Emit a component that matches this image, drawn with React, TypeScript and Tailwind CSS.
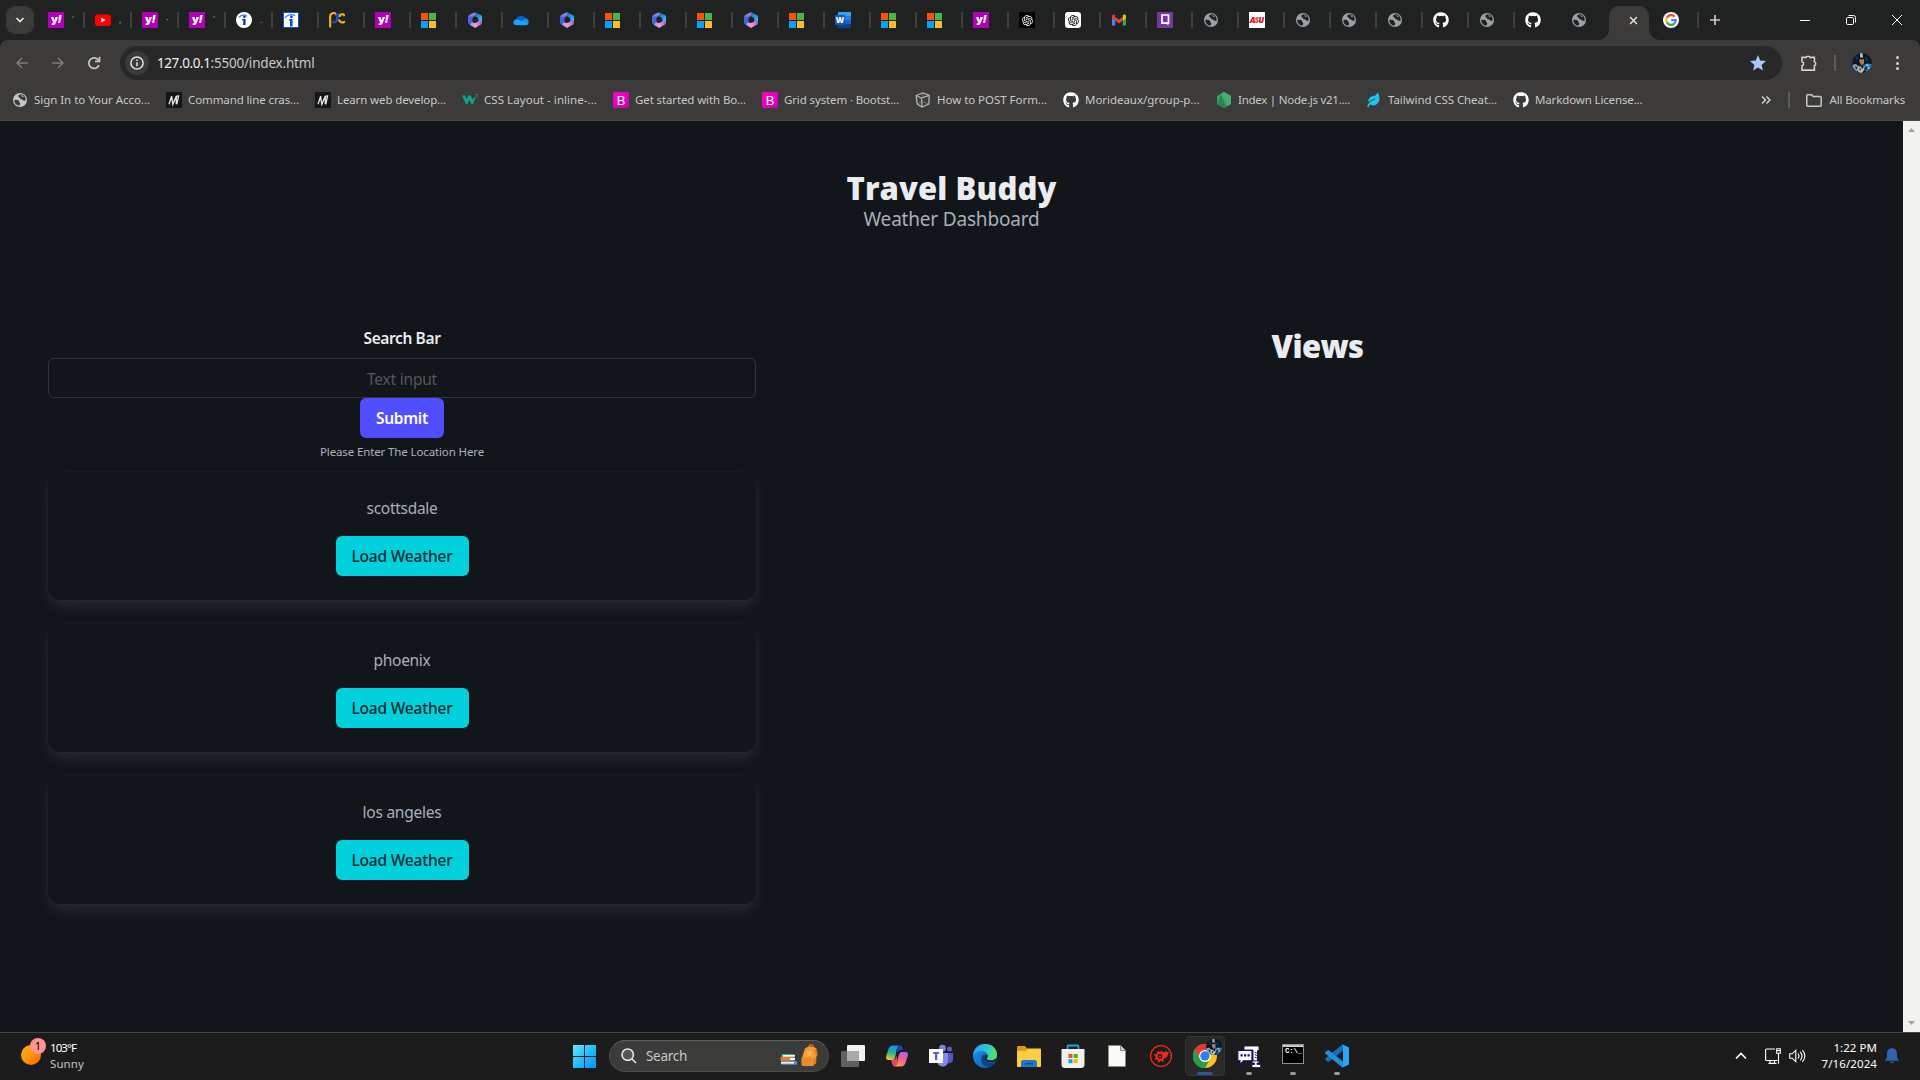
import { useLayoutEffect, useRef, useState, type ReactNode } from "react";
import { FaGithub, FaLeaf } from "react-icons/fa";
import { RiOpenaiFill } from "react-icons/ri";

/* Text whose letter spacing is adjusted so that it fills the given width. */
function Fit({ w, className = "", children }: { w: number; className?: string; children: string }) {
  const ref = useRef<HTMLSpanElement>(null);
  const [spacing, setSpacing] = useState(0);
  useLayoutEffect(() => {
    if (ref.current) {
      const natural = ref.current.getBoundingClientRect().width;
      setSpacing((w - natural) / children.length);
    }
  }, [w, children]);
  return (
    <span ref={ref} className={`inline-block whitespace-nowrap ${className}`} style={{ letterSpacing: `${spacing}px` }}>
      {children}
    </span>
  );
}

function Yahoo() {
  return (
    <span className="flex h-4 w-4 items-center justify-center bg-[#b100b8] pb-[2px] font-['Inter'] text-[11px] leading-none font-black tracking-[-0.6px] text-white">
      y<i>!</i>
    </span>
  );
}

function Youtube() {
  return (
    <svg viewBox="0 0 16 16" className="h-4 w-4">
      <rect x="0" y="2.5" width="16" height="11.5" rx="3" fill="#f00" />
      <path d="M6.4 5.8v4.6l4-2.3z" fill="#fff" />
    </svg>
  );
}

function InfoRound() {
  return (
    <svg viewBox="0 0 16 16" className="h-4 w-4">
      <circle cx="8" cy="8" r="8" fill="#fff" />
      <path d="M3 5.4C5 2.6 9 2.4 11 4.4" stroke="#3a6fc0" strokeWidth="1.1" fill="none" />
      <circle cx="8.4" cy="4.9" r="1.3" fill="#123d8f" />
      <path d="M6 7h3.600v6H7.200V8.200H6z" fill="#123d8f" />
    </svg>
  );
}

function InfoSquare() {
  return (
    <svg viewBox="0 0 16 16" className="h-4 w-4">
      <rect x=".5" y=".5" width="15" height="15" fill="#fff" stroke="#0a50d8" />
      <path d="M2 6C4 2.4 9 1.8 12 3.8" stroke="#3a7fe0" strokeWidth="1.2" fill="none" />
      <circle cx="8.4" cy="4.8" r="1.4" fill="#0a50d8" />
      <path d="M6 7h3.6v7.5H7V8.4H6z" fill="#0a50d8" />
    </svg>
  );
}

function PcLogo() {
  return (
    <svg viewBox="0 0 16 16" className="h-4 w-4" fill="none" strokeWidth="2.100">
      <path d="M1.200 15.500V4.500A3.300 3.300 0 0 1 7.500 3" stroke="#f9b21d" />
      <path d="M3.200 9.800c3 1.400 5.200-.3 4.900-3.600C8 3.400 9 1.900 11.300 1.800" stroke="#1b52c4" />
      <path d="M7 2c2 1.200 2 5 .3 6.500" stroke="#1b52c4" />
      <path d="M15.700 4C14 .9 10.800 2.200 10.600 5" stroke="#f9b21d" />
      <path d="M9.900 7.400c.4 3.200 3.600 4 6 2" stroke="#f9b21d" />
    </svg>
  );
}

function Microsoft() {
  return (
    <span className="grid h-[15px] w-[15px] grid-cols-2 gap-px">
      <span className="bg-[#ff5008]" />
      <span className="bg-[#46b83c]" />
      <span className="bg-[#00a3ff]" />
      <span className="bg-[#ffbb28]" />
    </span>
  );
}

function Office() {
  return (
    <svg viewBox="0 0 16 16" className="h-4 w-4">
      <defs>
        <linearGradient id="ofA" x1="0" y1="0" x2="0" y2="1">
          <stop offset="0" stopColor="#b79be8" />
          <stop offset=".4" stopColor="#5a5fd8" />
          <stop offset="1" stopColor="#1b6fd8" />
        </linearGradient>
        <linearGradient id="ofB" x1="0" y1="0" x2="1" y2="1">
          <stop offset="0" stopColor="#1f5fc8" />
          <stop offset="1" stopColor="#2fd0ff" />
        </linearGradient>
        <linearGradient id="ofC" x1="0" y1="0" x2="1" y2="0">
          <stop offset="0" stopColor="#b98cf0" />
          <stop offset=".5" stopColor="#f09ae0" />
          <stop offset="1" stopColor="#a05ab0" />
        </linearGradient>
      </defs>
      <path d="M8.500.3C5 1.500 1.200 3 1 5v6.500l3.500 2 1.300-3.400-.5-2.400.6-2.500L9 3.600z" fill="url(#ofA)" />
      <path d="M8 .3 13.500 3C14.700 3.700 15 4.200 15 5.500v4.300l-3.800-1.300V6L8 4.300z" fill="url(#ofB)" />
      <path d="M2.800 12.800 8 15.900l6.500-3.700c.5-.6.6-2.600.5-3.800l-3.700.6C10.500 10.200 9.500 11 7.500 11L5 10.300z" fill="url(#ofC)" />
    </svg>
  );
}

function OneDrive() {
  return (
    <svg viewBox="0 0 16 16" className="h-4 w-4">
      <path d="M3.200 7.500A5 5 0 0 1 12.500 6.400L9 12H3.500A3 3 0 0 1 3.200 7.500" fill="#0a5fc0" />
      <path d="M12.200 6.200a3.600 3.600 0 0 1 1 7h-9z" fill="#1490df" />
      <path d="M.4 11c-.6-3 3-5 5.600-3l9.400 3.600c-.4 1-1.400 1.500-2.400 1.500H3.200C1.800 13.100.6 12.300.4 11" fill="#1aa5ff" />
    </svg>
  );
}

function Word() {
  return (
    <span className="relative block h-4 w-4">
      <span className="absolute top-0 left-[3px] grid h-4 w-[13px] grid-rows-4 overflow-hidden rounded-[1px]">
        <span className="bg-[#2fa5f5]" />
        <span className="bg-[#1b86dd]" />
        <span className="bg-[#1565c8]" />
        <span className="bg-[#0f3f92]" />
      </span>
      <span className="absolute top-[3px] left-0 flex h-[10px] w-[10px] items-center justify-center rounded-[1px] bg-[#1657c0] font-['Open_Sans'] text-[8px] font-extrabold text-white">
        W
      </span>
    </span>
  );
}

function Globe({ color = "#9aa0a6", bg = "#202221" }: { color?: string; bg?: string }) {
  return (
    <svg viewBox="0 0 16 16" className="h-4 w-4">
      <circle cx="8" cy="8" r="7" fill={color} />
      <path d="M9.300 2.300c-2 .2-3.300.8-3 2.200.2 1.200 1.700.8 1.900 2 .2 1.400 1.900.5 2.500 1.600.4.900 1.700.6 2.900.4.3-2.800-1-5.500-4.300-6.200" fill={bg} />
      <path d="M2.400 7.900c1.700-.3 3.500-.3 4.300.6.900 1-.1 1.500 1 2 .9.500.4 1.900-.3 3C4.300 13.300 2.200 11 2.400 7.900" fill={bg} />
      <path d="M9 3.300c1 0 2.600.6 2.900 1.600-.9.500-2.400-.3-2.900-1.600" fill={color} />
    </svg>
  );
}

function Gmail() {
  return (
    <svg viewBox="0 0 16 16" className="h-4 w-4">
      <path d="M1 4v9.500h3.200V6.500z" fill="#4285f4" />
      <path d="M11.800 6.500v7H15V4z" fill="#34a853" />
      <path d="M4.200 4.800 8 7.700l3.800-2.900v3.800L8 11.400 4.200 8.600z" fill="#ea4335" />
      <path d="M1 4.200C1 2.400 2.800 2 4.200 3.300v5.300L1 6.200z" fill="#e33a2a" />
      <path d="M15 4.200c0-1.800-1.800-2.200-3.200-.9v5.300L15 6.200z" fill="#fbbc04" />
    </svg>
  );
}

function PurpleBook() {
  return (
    <svg viewBox="0 0 16 16" className="h-4 w-4">
      <rect width="16" height="16" fill="#7237a0" />
      <path d="M5 3h6.500v8.200H5z" fill="none" stroke="#fff" strokeWidth="1.700" />
      <path d="M8.300 10.500h3v3z" fill="#fff" />
    </svg>
  );
}

function Asu() {
  return (
    <span className="flex h-4 w-4 items-center justify-center overflow-hidden bg-white pr-px font-['Open_Sans'] text-[8.5px] leading-none font-extrabold tracking-[-1px] text-[#d3122e] italic">
      A<span className="text-[#dc5a1c]">S</span>U
    </span>
  );
}

function Google() {
  return (
    <svg viewBox="0 0 16 16" className="h-4 w-4" fill="none" strokeWidth="2.200">
      <circle cx="8" cy="8" r="8" fill="#fff" />
      <path d="M11.600 4.700A4.800 4.800 0 0 0 3.900 5.600" stroke="#ea4335" />
      <path d="M3.900 5.600a4.800 4.800 0 0 0 0 4.800" stroke="#fbbc05" />
      <path d="M3.900 10.400a4.800 4.800 0 0 0 7.400 1.200" stroke="#34a853" />
      <path d="M11.300 11.600A4.800 4.800 0 0 0 12.800 8.100H8.200" stroke="#4285f4" />
    </svg>
  );
}

function Avatar({ className }: { className: string }) {
  return (
    <svg viewBox="0 0 20 20" className={className}>
      <clipPath id="avatarClip">
        <circle cx="10" cy="10" r="10" />
      </clipPath>
      <g clipPath="url(#avatarClip)">
        <rect width="20" height="20" fill="#0c1826" />
        <path d="M8 0h2.500l.5 5H8z" fill="#a8c0c8" />
        <path d="M3 3l3 1-1 4zM13 3l3 3-2 3z" fill="#1d3a55" />
        <path d="M7.500 6h4.500v4.500L9.500 12.500 7.500 9z" fill="#a97c60" />
        <path d="M7.500 5c1-1.500 3.500-1 4 1.500l-4-.2z" fill="#1a1512" />
        <path d="M0 12l4-1 2 2-2 2 2 3-3 1z" fill="#8fa9c0" />
        <path d="M11 12l4-1.500 5 .5v4l-5 4-3-2z" fill="#2f78b4" />
        <path d="M6 12.500l2 1.500 1-1 1 3 3-3-1 4-2 3H7l-2-4z" fill="#aebdc8" />
        <path d="M3 13l2 1-1 3zM12 15l3-1-1 4zM7 15l2 1-1 2z" fill="#101c28" />
        <path d="M14 11l3 1-2 1.500zM16 14l2 .5-2 2z" fill="#b6d6ea" />
      </g>
    </svg>
  );
}

function Gpt({ dark }: { dark?: boolean }) {
  return dark ? (
    <span className="flex h-4 w-4 items-center justify-center bg-black text-white">
      <RiOpenaiFill size={13} />
    </span>
  ) : (
    <span className="flex h-4 w-4 items-center justify-center rounded-[3px] bg-white text-black">
      <RiOpenaiFill size={13} />
    </span>
  );
}

type Tab = { icon: ReactNode; wide?: boolean; hint?: string; noSep?: boolean };

const tabs: Tab[] = [
  { icon: <Yahoo />, wide: true, hint: "'" },
  { icon: <Youtube />, wide: true, hint: "," },
  { icon: <Yahoo />, wide: true, hint: "·" },
  { icon: <Yahoo />, wide: true, hint: "'" },
  { icon: <InfoRound />, wide: true, hint: "." },
  { icon: <InfoSquare /> },
  { icon: <PcLogo /> },
  { icon: <Yahoo /> },
  { icon: <Microsoft /> },
  { icon: <Office /> },
  { icon: <OneDrive /> },
  { icon: <Office /> },
  { icon: <Microsoft /> },
  { icon: <Office /> },
  { icon: <Microsoft /> },
  { icon: <Office /> },
  { icon: <Microsoft /> },
  { icon: <Word /> },
  { icon: <Microsoft /> },
  { icon: <Microsoft /> },
  { icon: <Yahoo /> },
  { icon: <Gpt dark /> },
  { icon: <Gpt /> },
  { icon: <Gmail /> },
  { icon: <PurpleBook /> },
  { icon: <Globe /> },
  { icon: <Asu /> },
  { icon: <Globe /> },
  { icon: <Globe /> },
  { icon: <Globe /> },
  { icon: <FaGithub size={16} color="#fff" /> },
  { icon: <Globe /> },
  { icon: <FaGithub size={16} color="#fff" />, noSep: true },
];

function TabCell({ tab }: { tab: Tab }) {
  return (
    <div className={`flex h-4 shrink-0 items-center pr-[10px] ${tab.wide ? "w-[47px]" : "w-[46px]"}`}>
      <span className="flex h-4 w-4 items-center">{tab.icon}</span>
      <span className="flex-1 pl-2 text-[9px] leading-4 text-[#9a9a98]">{tab.hint}</span>
      {!tab.noSep && <span className="h-4 w-[2px] bg-[#3f403e]" />}
    </div>
  );
}

function TabStrip() {
  return (
    <div className="flex h-10 items-start bg-[#202221] pt-[6px] pl-[6px]">
      <div className="mr-[14px] flex h-7 w-7 items-center justify-center rounded-[9px] bg-[#3c3b39]">
        <svg viewBox="0 0 10 10" className="h-[10px] w-[10px]" fill="none" stroke="#e6e6e4" strokeWidth="1.700">
          <path d="M1.500 3 5 6.500 8.500 3" />
        </svg>
      </div>
      <div className="flex pt-[6px]">
        {tabs.map((tab, i) => (
          <TabCell key={i} tab={tab} />
        ))}
        <span className="w-[38px]">
          <Globe />
        </span>
      </div>
      <div className="relative flex h-[34px] w-10 items-center justify-center rounded-t-[10px] bg-[#3c3b39] pb-[6px] pl-2">
        <span className="absolute bottom-0 -left-[10px] h-[10px] w-[10px] bg-[radial-gradient(circle_at_0_0,#202221_9.500px,#3c3b39_10px)]" />
        <span className="absolute -right-[10px] bottom-0 h-[10px] w-[10px] bg-[radial-gradient(circle_at_100%_0,#202221_9.500px,#3c3b39_10px)]" />
        <svg viewBox="0 0 10 10" className="h-[9px] w-[9px]" stroke="#e0e0de" strokeWidth="1.700">
          <path d="M1.200 1.200 8.800 8.800M8.800 1.200 1.200 8.800" />
        </svg>
      </div>
      <div className="ml-[14px] flex pt-[6px]">
        <TabCell tab={{ icon: <Google /> }} />
        <svg viewBox="0 0 12 12" className="mt-[2px] h-3 w-3" stroke="#c7c7c5" strokeWidth="1.700">
          <path d="M6 1v10M1 6h10" />
        </svg>
      </div>
      <div className="ml-auto flex h-7 items-center text-white">
        <span className="flex w-[46px] justify-center">
          <span className="h-px w-[10px] bg-white" />
        </span>
        <span className="flex w-[46px] justify-center">
          <svg viewBox="0 0 10 10" className="h-[10px] w-[10px]" fill="none" stroke="#fff">
            <rect x=".5" y="2.500" width="7" height="7" rx="1.200" />
            <path d="M2.500.5H7.500A2 2 0 0 1 9.500 2.500V7.500" />
          </svg>
        </span>
        <span className="flex w-[46px] justify-center">
          <svg viewBox="0 0 10 10" className="h-[10px] w-[10px]" stroke="#fff">
            <path d="M0 0 10 10M10 0 0 10" />
          </svg>
        </span>
      </div>
    </div>
  );
}

function AddressBar() {
  return (
    <div className="flex h-[46px] items-center pl-4">
      <svg viewBox="0 0 12 12" className="h-3 w-3" fill="none" stroke="#7d7d7b" strokeWidth="1.500">
        <path d="M12 6H1M6 1 1 6l5 5" />
      </svg>
      <svg viewBox="0 0 12 12" className="ml-6 h-3 w-3" fill="none" stroke="#7d7d7b" strokeWidth="1.500">
        <path d="M0 6h11M6 1l5 5-5 5" />
      </svg>
      <svg viewBox="0 0 14 14" className="ml-[23px] h-[14px] w-[14px]" fill="none" stroke="#c7c7c5" strokeWidth="1.700">
        <path d="M12 9.200A5.300 5.300 0 1 1 11.600 4.300" />
        <path d="M12.500.8v4.600H8" />
      </svg>
      <div className="ml-[19px] flex h-[34px] w-[1662px] items-center rounded-full bg-[#282828] pr-4 pl-[5px]">
        <span className="flex h-6 w-6 items-center justify-center rounded-full bg-[#3c3b39]">
          <svg viewBox="0 0 14 14" className="h-[14px] w-[14px]" fill="none" stroke="#e3e3e1" strokeWidth="1.500">
            <circle cx="7" cy="7" r="6.100" />
            <path d="M7 6.300v4M7 3.600v1.500" />
          </svg>
        </span>
        <span className="ml-2 flex text-[13.5px] text-[#c9c9c7]">
          <Fit w={53.500} className="text-[#f0f0ee]">127.0.0.1</Fit>
          <Fit w={104}>:5500/index.html</Fit>
        </span>
        <svg viewBox="0 0 16 16" className="ml-auto h-4 w-4" fill="#a8c7fa">
          <path d="M8 0 10.200 5.600 16 6.100 11.600 9.900 13 15.600 8 12.500 3 15.600 4.400 9.900 0 6.100 5.800 5.600z" />
        </svg>
      </div>
      <svg viewBox="0 0 18 18" className="ml-[18px] h-[18px] w-[18px]" fill="none" stroke="#d0d0ce" strokeWidth="1.600">
        <path d="M2 3.400h4.200a2 1.700 0 0 1 3.800 0h4.400v4.400a1.700 1.900 0 0 1 0 3.700v4.600H2v-4.300a2.100 2.100 0 0 0 0-4.100z" />
      </svg>
      <span className="ml-[16px] h-4 w-[2px] bg-[#5c5c5a]" />
      <Avatar className="ml-4 h-5 w-5" />
      <span className="ml-6 flex flex-col gap-[2.500px]">
        <i className="h-[3px] w-[3px] rounded-full bg-[#d0d0ce]" />
        <i className="h-[3px] w-[3px] rounded-full bg-[#d0d0ce]" />
        <i className="h-[3px] w-[3px] rounded-full bg-[#d0d0ce]" />
      </span>
    </div>
  );
}

function Mdn() {
  return (
    <svg viewBox="0 0 16 16" className="h-4 w-4" fill="none" stroke="#e8e8e8">
      <rect width="16" height="16" fill="#15141a" stroke="none" />
      <path d="M3 12.300 5.600 4.200 6.800 12.300 10.300 4.200v8.100M10.300 4.200l2.300-.2-1.800 8.300" strokeWidth="1.300" />
    </svg>
  );
}

function W3() {
  return (
    <svg viewBox="0 0 17 16" className="h-4 w-[17px]" fill="#12a08a" stroke="none">
      <path d="M0 3.600h3.200l1.500 3.900 1.500-3.900h2.600l1.800 4 1-2h2.200L11 12.300H9.500L7.400 7.800l-2 4.500H4z" />
      <path d="M13.600 2.400h2l-1 1.300c1.600.2 1 2-.9 1.500" fill="none" stroke="#12a08a" strokeWidth=".9" />
    </svg>
  );
}

function Bootstrap() {
  return (
    <span className="flex h-4 w-4 items-center justify-center rounded-[2px] bg-linear-to-br from-[#ff00c8] to-[#c800b4] font-['Liberation_Sans'] text-[13px] leading-none text-white">
      B
    </span>
  );
}

function Cube() {
  return (
    <svg viewBox="0 0 16 16" className="h-4 w-4" fill="none" stroke="#b4b4b0" strokeWidth="1.300">
      <path d="M1.200 3.500 8 1l6.300 2.400-.5 8.600L7 15 2.200 12z" />
      <path d="M1.200 3.500 6.500 6l7.800-2.600M6.500 6 7 15" />
      <path d="M2.200 12l4.600-2.500 7 2.500M8 1v4" strokeWidth=".8" stroke="#8a8a87" />
    </svg>
  );
}

function NodeHex() {
  return (
    <svg viewBox="0 0 16 16" className="h-4 w-4">
      <path d="M8 0l7 4v8l-7 4-7-4V4z" fill="#3c9f62" />
      <path d="M8 0l7 4v8l-3 1.700L5 1.700z" fill="#4aae6e" />
      <path d="M1 12l4-9 5 11.800L8 16z" fill="#2c8550" />
    </svg>
  );
}

const bookmarks: { icon: ReactNode; text: string; cell: string; w: number }[] = [
  { icon: <Globe color="#c4c7c5" bg="#3c3b39" />, text: "Sign In to Your Acco...", cell: "w-[154px]", w: 116 },
  { icon: <Mdn />, text: "Command line cras...", cell: "w-[149px]", w: 111 },
  { icon: <Mdn />, text: "Learn web develop...", cell: "w-[147px]", w: 109 },
  { icon: <W3 />, text: "CSS Layout - inline-...", cell: "w-[151px]", w: 113 },
  { icon: <Bootstrap />, text: "Get started with Bo...", cell: "w-[149px]", w: 111 },
  { icon: <Bootstrap />, text: "Grid system · Bootst...", cell: "w-[153px]", w: 115 },
  { icon: <Cube />, text: "How to POST Form...", cell: "w-[148px]", w: 110 },
  { icon: <FaGithub size={16} color="#fff" />, text: "Morideaux/group-p...", cell: "w-[153px]", w: 114.5 },
  { icon: <NodeHex />, text: "Index | Node.js v21....", cell: "w-[150px]", w: 112 },
  { icon: <FaLeaf size={14} color="#16c8f0" className="-rotate-12" />, text: "Tailwind CSS Cheat...", cell: "w-[147px]", w: 109 },
  { icon: <FaGithub size={16} color="#fff" />, text: "Markdown License...", cell: "w-[150px]", w: 107.5 },
];

function BookmarkBar() {
  return (
    <div className="flex h-[35px] items-center border-b border-[#4b4b49] pb-[6px] pl-3 text-[11.5px] text-[#c9c9c7]">
      {bookmarks.map((b) => (
        <div key={b.text} className={`flex shrink-0 items-center ${b.cell}`}>
          <span className="flex h-4 w-[22px] shrink-0 items-center">{b.icon}</span>
          <Fit w={b.w}>{b.text}</Fit>
        </div>
      ))}
      <div className="ml-auto flex items-center pr-[15px]">
        <svg viewBox="0 0 10 8" className="h-2 w-[10px]" fill="none" stroke="#d0d0ce" strokeWidth="1.500">
          <path d="M1 .5 4.500 4 1 7.500M5.500.5 9 4 5.500 7.500" />
        </svg>
        <span className="ml-[17px] h-4 w-[2px] bg-[#5c5c5a]" />
        <svg viewBox="0 0 16 13" className="mr-2 ml-4 h-[13px] w-4" fill="none" stroke="#c9c9c7" strokeWidth="1.500">
          <path d="M.8 1.700a.9.900 0 0 1 .9-.9h4l1.600 1.700h7a.9.900 0 0 1 .9.900v7.900a.9.900 0 0 1-.9.900H1.700a.9.900 0 0 1-.9-.9z" />
        </svg>
        <Fit w={75.500}>All Bookmarks</Fit>
      </div>
    </div>
  );
}

const cities: { name: string; w: number }[] = [
  { name: "scottsdale", w: 71 },
  { name: "phoenix", w: 57 },
  { name: "los angeles", w: 79 },
];

function Page() {
  return (
    <div className="flex h-[911px]">
      <main className="flex-1 bg-[#12161a] text-center text-[#a9afbb]">
        <header className="flex h-[183px] flex-col items-center pt-[49px]">
          <h1 className="h-9 font-['Open_Sans'] text-[31px] leading-9 font-extrabold text-[#ebecf0]">
            <Fit w={210}>Travel Buddy</Fit>
          </h1>
          <p className="pt-px text-[19px] leading-6">
            <Fit w={176}>Weather Dashboard</Fit>
          </p>
        </header>
        <div className="flex">
          <section className="ml-12 w-[708px]">
            <div className="h-[54px] pt-[22px] text-[15.5px] leading-6 font-semibold text-[#ebecf0]">
              <Fit w={77}>Search Bar</Fit>
            </div>
            <div className="flex h-10 items-center justify-center rounded-md border border-[#2f3440] pt-[3px] text-[15.5px] text-[#53565c]">
              <Fit w={70}>Text input</Fit>
            </div>
            <button className="mx-auto flex h-10 w-[84px] items-center justify-center rounded-md bg-[#504eff] pt-[2px] text-[15.5px] font-semibold text-white">
              <Fit w={52}>Submit</Fit>
            </button>
            <p className="h-[34px] pt-[5px] text-[11.5px] leading-[18px] text-[#abb1bf]">
              <Fit w={164}>Please Enter The Location Here</Fit>
            </p>
            <div className="flex flex-col gap-6">
              {cities.map((c) => (
                <article
                  key={c.name}
                  className="flex h-32 flex-col items-center rounded-xl bg-[#12161a] pt-6 shadow-[0_8px_16px_-2px_rgba(235,236,240,0.1),0_0_0_1px_rgba(235,236,240,0.02)]"
                >
                  <span className="text-[15.5px] leading-6">
                    <Fit w={c.w}>{c.name}</Fit>
                  </span>
                  <button className="mt-4 flex h-10 w-[133px] items-center justify-center rounded-md bg-[#00d1dd] pt-[2px] text-[15.5px] font-medium text-[#052b2f]">
                    <Fit w={101}>Load Weather</Fit>
                  </button>
                </article>
              ))}
            </div>
          </section>
          <section className="flex flex-1 justify-center pt-6 pr-[24px]">
            <h2 className="font-['Open_Sans'] text-[31px] leading-9 font-extrabold text-[#ebecf0]">
              <Fit w={92}>Views</Fit>
            </h2>
          </section>
        </div>
      </main>
      <aside className="flex w-[17px] flex-col items-center justify-between bg-[#f1f1ee] py-[7px]">
        <svg viewBox="0 0 7 4" className="h-1 w-[7px]" fill="#a3a3a3">
          <path d="M0 4 3.500 0 7 4z" />
        </svg>
        <svg viewBox="0 0 7 4" className="h-1 w-[7px]" fill="#a3a3a3">
          <path d="M0 0 3.500 4 7 0z" />
        </svg>
      </aside>
    </div>
  );
}

function StartIcon() {
  return (
    <svg viewBox="0 0 23 23" className="h-[23px] w-[23px]">
      <linearGradient id="win" x1="0" y1="0" x2="1" y2="1">
        <stop offset="0" stopColor="#6fe4ff" />
        <stop offset=".5" stopColor="#1fc0fb" />
        <stop offset="1" stopColor="#0a90f5" />
      </linearGradient>
      <path d="M0 0h11v11H0zM12 0h11v11H12zM0 12h11v11H0zM12 12h11v11H12z" fill="url(#win)" />
    </svg>
  );
}

function SearchPill() {
  return (
    <div className="flex h-8 w-[220px] items-center rounded-full border border-[#4a4a49] border-t-[#5f5f5d] bg-[#3b3b3a] pl-[11px]">
      <svg viewBox="0 0 16 16" className="h-4 w-4" fill="none" stroke="#e6e6e4" strokeWidth="1.600">
        <circle cx="6.700" cy="6.700" r="5.700" fill="#555" />
        <path d="M11 11l4 4" />
      </svg>
      <Fit w={41} className="ml-[9px] text-[13.5px] leading-5 text-[#c8c8c6]">
        Search
      </Fit>
      <svg viewBox="0 0 40 24" className="ml-auto mr-[9px] h-6 w-10">
        <rect x="2.500" y="10" width="13" height="3.500" rx="1" fill="#27b5b0" />
        <rect x="4" y="11" width="12" height="1.700" fill="#f4f4f0" />
        <rect x="1.500" y="13" width="14" height="4" rx="1" fill="#f07a18" />
        <rect x="11" y="14" width="5" height="2" fill="#fff" />
        <rect x="2" y="17" width="16" height="3.800" rx="1" fill="#4a8ff0" />
        <rect x="2" y="18" width="13" height="1.600" fill="#f4f4f0" />
        <path d="M30 3.500c.3-3.500 4-3.500 4.500 0" fill="none" stroke="#d9791c" strokeWidth="1.300" />
        <path d="M26 4.500c3-3 8.500-2.500 11.500 0l-.5 13-3 4.500H23.500c-2-5 .5-12 2.500-17.500" fill="#f59a34" />
        <path d="M35 4.500l3 2.500.8 3.500-1.300 3zM34 14.500h3.500l-.5 5-3 2z" fill="#dd7f1d" />
        <path d="M22.500 13.500l10.500.5-.5 7c-3 1.500-8 1.500-10 0z" fill="#e88a25" />
        <path d="M28 7l5 .5-.5 4-4.500 1z" fill="#fbb45c" />
      </svg>
    </div>
  );
}

function TaskView() {
  return (
    <svg viewBox="0 0 24 24" className="h-6 w-6">
      <rect x="6" y="1" width="18" height="16" rx="1" fill="#f2f2f0" />
      <rect x="0" y="7" width="18" height="16" rx="1" fill="#5f5f5e" />
      <rect x="6" y="7" width="12" height="10" fill="#a9a9a8" />
    </svg>
  );
}

function Copilot() {
  return (
    <svg viewBox="0 0 24 24" className="h-6 w-6">
      <defs>
        <linearGradient id="cpA" x1=".5" y1="0" x2=".3" y2="1">
          <stop offset="0" stopColor="#1f8cf5" />
          <stop offset=".5" stopColor="#25b38d" />
          <stop offset="1" stopColor="#f3c92a" />
        </linearGradient>
        <linearGradient id="cpB" x1=".7" y1="0" x2=".3" y2="1">
          <stop offset="0" stopColor="#b65ff0" />
          <stop offset=".5" stopColor="#f25c98" />
          <stop offset="1" stopColor="#ff9a50" />
        </linearGradient>
      </defs>
      <path d="M12 1.500h3c2 0 2.500 1.500 3.200 4.500h-3c-1.600 0-2.500 1-3 3z" fill="#1848c0" />
      <path d="M14 1.500H7.500C4.500 1.500 3.600 4.500 2.500 8S-.5 15.500 3.500 16H7c2.500 0 3-2 3.700-5s1-9.500 3.300-9.500" fill="url(#cpA)" />
      <path d="M6 16h2c2-.5 2.700-1.500 3.500-4l1 4-1 6.500H9.500C7.200 22.500 6.900 18 6 16" fill="#e2475a" />
      <path d="M10 22.500h6.500c3 0 3.900-3 5-6.500s3-7.500-1-8H17c-2.500 0-3 2-3.700 5s-1 9.500-3.300 9.500" fill="url(#cpB)" />
    </svg>
  );
}

function Teams() {
  return (
    <span className="relative block h-6 w-6">
      <svg viewBox="0 0 24 24" className="h-6 w-6">
        <circle cx="13.500" cy="4.200" r="3.400" fill="#7b7fe8" />
        <circle cx="20.500" cy="5" r="2.500" fill="#5a5fc8" />
        <path d="M15 9h9v6.500c0 4-5 5-7 2z" fill="#5257c6" />
        <path d="M8 9h11v8c0 7-9 7-10.500 2z" fill="#8388ee" />
      </svg>
      <span className="absolute top-[5px] left-0 flex h-[14px] w-[14px] items-center justify-center bg-white font-['Open_Sans'] text-[11px] font-extrabold text-[#5457c4]">
        T
      </span>
    </span>
  );
}

function Edge() {
  return (
    <svg viewBox="0 0 24 24" className="h-6 w-6">
      <defs>
        <linearGradient id="edA" x1="0" y1=".3" x2="1" y2=".5">
          <stop offset="0" stopColor="#2aa5f0" />
          <stop offset=".55" stopColor="#2bc5dc" />
          <stop offset="1" stopColor="#5cdf5c" />
        </linearGradient>
        <linearGradient id="edB" x1="0" y1="0" x2="1" y2="1">
          <stop offset="0" stopColor="#1b9cec" />
          <stop offset="1" stopColor="#0f4fa8" />
        </linearGradient>
      </defs>
      <circle cx="12" cy="12" r="12" fill="url(#edB)" />
      <path d="M0 11.500C.8 4.500 5.500 0 12 0c7.500 0 12 5 12 10.500 0 4-3 6-6 6-2.500 0-4.500-1-4.500-2 0-.8 1.300-1 1.300-3C14.800 9 12 7 8.500 7 4.500 7 1 9 0 11.500" fill="url(#edA)" />
      <path d="M9 12.500c-2.500 5 2 10.500 7.500 10.500 2.500-.8 5-2.700 6.300-5-5 2.500-11 .5-11.600-4.500C11 12 11.800 10.500 12.500 10 11 10 9.700 11 9 12.500" fill="#0c3f8a" />
      <path d="M11.300 13c.4-2.500 2.500-3 3.500-1.500 0 2-1.300 2.200-1.300 3 0 1 2 2 4.500 2 1.700 0 3.400-.6 4.600-1.900l.8 2.200c-5 2.900-11.900 1.200-12.100-3.800" fill="#1d1d1d" />
    </svg>
  );
}

function Explorer() {
  return (
    <svg viewBox="0 0 24 24" className="h-6 w-6">
      <path d="M0 3.500C0 2.500.6 2 1.500 2H8l2.500 3v4H0z" fill="#dd9a0c" />
      <path d="M0 7h8.500l2-2.500H23c.6 0 1 .4 1 1V22c0 .6-.4 1-1 1H1c-.6 0-1-.4-1-1z" fill="#fbcd45" />
      <path d="M4 23v-4.500c0-1.600.9-2.500 2.500-2.500h11c1.600 0 2.500.9 2.500 2.500V23z" fill="#1879cf" />
      <rect x="8" y="19" width="8" height="1.500" rx=".7" fill="#0d54a0" />
    </svg>
  );
}

function Store() {
  return (
    <svg viewBox="0 0 24 24" className="h-6 w-6">
      <path d="M6.500 6V2.500c0-.6.400-1 1-1h9c.6 0 1 .4 1 1V6" fill="none" stroke="#18a5f0" strokeWidth="1.800" />
      <path d="M.5 5h23v15.500a3.500 3.500 0 0 1-3.500 3.500H4a3.500 3.500 0 0 1-3.500-3.500z" fill="#f0f0ef" />
      <path d="M7.500 10h4v4h-4z" fill="#f1511b" />
      <path d="M12.700 10h4v4h-4z" fill="#55b300" />
      <path d="M7.500 15.200h4v4h-4z" fill="#00a4ef" />
      <path d="M12.700 15.200h4v4h-4z" fill="#fbb300" />
    </svg>
  );
}

function FileIcon() {
  return (
    <svg viewBox="0 0 24 24" className="h-6 w-6">
      <path d="M3.500 1.500h12l5 5v16h-17z" fill="#fbfcf7" stroke="#8b8b88" strokeWidth=".8" />
      <path d="M15.500 1.500v5h5" fill="#d6d6d2" stroke="#77777a" strokeWidth=".9" />
    </svg>
  );
}

function RedGear() {
  return (
    <svg viewBox="0 0 24 24" className="h-6 w-6" fill="none" stroke="#f02a1c">
      <circle cx="12" cy="12" r="10.400" strokeWidth="1.300" />
      <circle cx="11" cy="12.500" r="3.400" strokeWidth="2" />
      <circle cx="11" cy="12.500" r="5" strokeWidth="1.500" strokeDasharray="2 1.930" />
      <path d="M13.500 8h2l1-1.200 1 1.200h2.500l-2 5h-3z" fill="#f02a1c" stroke="none" />
      <circle cx="11" cy="12.500" r="1" fill="#f02a1c" stroke="none" />
    </svg>
  );
}

function Chrome() {
  return (
    <span className="relative block h-6 w-6">
      <svg viewBox="0 0 24 24" className="h-6 w-6">
        <circle cx="12" cy="12" r="12" fill="#fbc116" />
        <path d="M1.600 6A12 12 0 0 1 22.400 6H12z" fill="#e33b2e" />
        <path d="M1.600 6 6.800 15 12 6z" fill="#e33b2e" />
        <path d="M1.600 6A12 12 0 0 0 12 24l5-8.700a6 6 0 0 1-10 0z" fill="#1fa04c" />
        <circle cx="12" cy="12" r="6" fill="#fff" />
        <circle cx="12" cy="12" r="4.700" fill="#2b7ff0" />
      </svg>
      <Avatar className="absolute -top-[5px] left-[13px] h-4 w-4" />
    </span>
  );
}

function ChatClamp() {
  return (
    <svg viewBox="0 0 24 24" className="h-6 w-6">
      <path d="M7 2h15v4.500h-1.500V17H16V6H7z" fill="#fff" stroke="#1c0c5c" strokeWidth=".9" />
      <path d="M15 17h7v2h-2v1.500h3.500V23.500h-8.500v-3H17.500V19H15z" fill="#fff" stroke="#1c0c5c" strokeWidth=".8" />
      <path d="M17.800 8l2 1M17.800 10.500l2 1M17.800 13l2 1" stroke="#1c0c5c" />
      <path d="M.8 6.500h14.200v10.300H6.500L3 20.800v-4H.8z" fill="#fff" stroke="#1c0c5c" strokeWidth="1.200" />
      <path d="M3.500 10.300h2.200v2.200H3.500zM7 10.300h2.200v2.200H7zM10.500 10.300h2.200v2.200h-2.200z" fill="#1c0c5c" />
    </svg>
  );
}

function Terminal() {
  return (
    <span className="-mt-1 block h-[20px] w-[22px] border border-[#8f8f8e] bg-black">
      <span className="block h-[2px] bg-[#c9c9c8]" />
      <span className="block pl-[2px] font-['Liberation_Mono'] text-[7.5px] leading-[9px] font-bold tracking-[-0.3px] text-white">C:\_</span>
    </span>
  );
}

function VsCode() {
  return (
    <svg viewBox="0 0 24 24" className="h-6 w-6">
      <path d="M18 0v6.500L3.500 18 .8 16.500c-1-.8-.8-1.700 0-2.400z" fill="#1272b8" />
      <path d="M.8 7.500 3.500 6 18 17.500V24L.8 10c-.8-.7-1-1.700 0-2.500" fill="#1f8fdc" />
      <path d="M17 .3 23 3c.7.300 1 .8 1 1.500v15c0 .7-.3 1.200-1 1.500l-6 2.700c.6-.3 1-.8 1-1.500V1.800c0-.7-.4-1.200-1-1.500" fill="#2aa5f5" />
    </svg>
  );
}

type App = { icon: ReactNode; active?: boolean; running?: boolean };

const apps: App[] = [
  { icon: <TaskView /> },
  { icon: <Copilot /> },
  { icon: <Teams /> },
  { icon: <Edge /> },
  { icon: <Explorer /> },
  { icon: <Store /> },
  { icon: <FileIcon /> },
  { icon: <RedGear /> },
  { icon: <Chrome />, active: true },
  { icon: <ChatClamp />, running: true },
  { icon: <Terminal />, running: true },
  { icon: <VsCode />, running: true },
];

function Taskbar() {
  return (
    <footer className="flex h-12 items-start border-t border-[#464646] bg-[#1c1c1c]">
      <div className="flex w-[573px] items-start pt-[5px] pl-5">
        <span className="relative mt-[6px] h-6 w-[30px]">
          <span className="absolute top-[1px] left-[1px] h-5 w-5 rounded-full bg-linear-to-br from-[#eeb51f] via-[#ff9208] to-[#ff5a08]" />
          <span className="absolute -top-[6px] left-[10px] flex h-4 w-4 items-center justify-center rounded-full bg-[#ff958e] text-[11px] text-black">
            1
          </span>
        </span>
        <div className="flex flex-col pt-[2px] text-[11.5px] leading-4">
          <Fit w={29} className="text-white">103°F</Fit>
          <Fit w={34} className="text-[#c2c2c0]">Sunny</Fit>
        </div>
      </div>
      <div className="mt-3 w-9">
        <StartIcon />
      </div>
      <div className="mt-[7px] mr-[2px]">
        <SearchPill />
      </div>
      {apps.map((a, i) => (
        <div key={i} className="flex h-[47px] w-11 flex-col items-center pt-[3px]">
          <div className={`flex h-10 w-10 flex-col items-center rounded-[4px] pt-2 ${a.active ? "border border-[#343434] bg-[#2a2a2a] pt-[7px]" : ""}`}>
            <div className="flex h-6 items-center">{a.icon}</div>
            {a.active && <span className="mt-1 h-[3px] w-4 shrink-0 rounded-full bg-[#2b559c]" />}
            {a.running && <span className="mt-1 h-[3px] w-[6px] shrink-0 rounded-full bg-[#9a9a9a]" />}
          </div>
        </div>
      ))}
      <div className="ml-auto flex items-start pr-[21px]">
        <svg viewBox="0 0 12 8" className="mt-[19px] mr-[18px] h-2 w-3" fill="none" stroke="#fff" strokeWidth="1.600">
          <path d="M1 6.500 6 1.500l5 5" />
        </svg>
        <svg viewBox="0 0 16 16" className="mt-[15px] mr-2 h-4 w-4" fill="none" stroke="#fff" strokeWidth="1.100">
          <path d="M10 1H1.600A1 1 0 0 0 .600 2v9.500a1 1 0 0 0 1 1H12.500M5 12.500v2.800M9.500 12.500v2.800M3.500 15.400h8" />
          <path d="M11.700.8h3.600v4.400h-3.600zM11.700 2.500h3.600M13.500 5.200v10.500" />
        </svg>
        <svg viewBox="0 0 17 14" className="mt-4 mr-4 h-[14px] w-[17px]" fill="none" stroke="#fff" strokeWidth="1.100">
          <path d="M.7 4.800h2.600L6.800 1.200v11.600L3.300 9.200H.7zM9 4.500c1.200 1.500 1.200 3.500 0 5M11.200 2.800c2.200 2.500 2.200 6 0 8.500M13.400 1.200c3.200 3.400 3.200 8.200 0 11.600" />
        </svg>
        <div className="flex flex-col items-end pt-[7px] pr-2 text-[11.5px] leading-4 text-white">
          <Fit w={43.500}>1:22 PM</Fit>
          <Fit w={55.500}>7/16/2024</Fit>
        </div>
        <svg viewBox="0 0 14 16" className="mt-[15px] h-4 w-[14px]" fill="#2f62b0">
          <path d="M7 .3c3 0 5 2.300 5 5v4l1.600 2.500c.2.600-.1 1-.7 1H1.100c-.6 0-.9-.4-.7-1L2 9.300v-4c0-2.700 2-5 5-5M4.800 13.700h4.400c-.4 1.900-4 1.900-4.400 0" />
        </svg>
      </div>
    </footer>
  );
}

export default function App() {
  return (
    <div className="flex h-[1080px] w-[1920px] flex-col overflow-hidden bg-[#202221] font-['Noto_Sans','Open_Sans',sans-serif]">
      <TabStrip />
      <div className="h-[81px] rounded-t-[8px] bg-[#3c3b39]">
        <AddressBar />
        <BookmarkBar />
      </div>
      <Page />
      <Taskbar />
    </div>
  );
}
